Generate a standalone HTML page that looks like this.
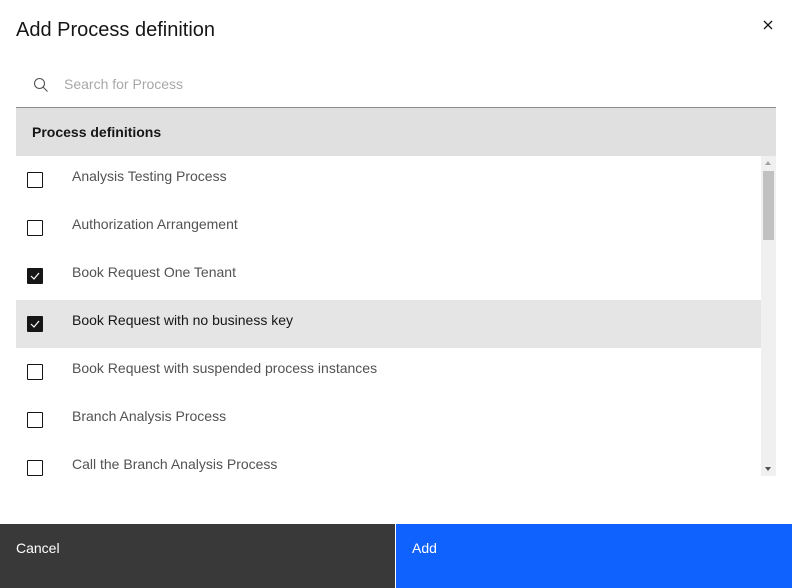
<!DOCTYPE html>
<html><head><style>
*{margin:0;padding:0;box-sizing:border-box}
body{width:792px;height:588px;background:#fff;font-family:"Liberation Sans",sans-serif;position:relative;overflow:hidden;color:#161616}
.t{position:absolute;left:16px;top:19px;font-size:20px;color:#161616}
.s{position:absolute;left:16px;top:60px;width:760px;height:48px;border-bottom:1px solid #8d8d8d}
.s span{position:absolute;left:48px;top:16px;font-size:14px;color:#a8a8a8}
.h{position:absolute;left:16px;top:108px;width:760px;height:48px;background:#e0e0e0;font-weight:bold;font-size:14px;padding:16px 0 0 16px}
.row{position:absolute;left:16px;width:745px;height:48px;font-size:14px;color:#525252}
.row span{position:absolute;left:56px;top:12px}
.cb{position:absolute;left:11px;top:16px;width:16px;height:16px;border:1px solid #161616;border-radius:1px}
.cb.c{background:#161616}
.hl{background:#e5e5e5;color:#161616}
.sb{position:absolute;left:761px;top:156px;width:15px;height:320px;background:#f0f0f0}
.th{position:absolute;left:2px;top:15px;width:11px;height:69px;background:#c1c1c1}
.f{position:absolute;top:524px;height:64px;font-size:14px;color:#fff;padding:16px}
</style></head><body>
<div class="t">Add Process definition</div>
<svg style="position:absolute;left:763px;top:20px" width="10" height="10" viewBox="0 0 10 10"><path d="M1 1l8 8M9 1l-8 8" stroke="#161616" stroke-width="1.3"/></svg>
<div class="s"><svg style="position:absolute;left:17px;top:17px" width="16" height="16" viewBox="0 0 16 16"><circle cx="6.5" cy="6.5" r="5" fill="none" stroke="#525252" stroke-width="1.1"/><path d="M10 10l4.5 4.5" stroke="#525252" stroke-width="1.1"/></svg><span>Search for Process</span></div>
<div class="h">Process definitions</div>
<div class="row" style="top:156px"><div class="cb"></div><span>Analysis Testing Process</span></div>
<div class="row" style="top:204px"><div class="cb"></div><span>Authorization Arrangement</span></div>
<div class="row" style="top:252px"><div class="cb c"><svg width="14" height="14" viewBox="0 0 14 14"><path d="M3 7l3 3 5-6" fill="none" stroke="#fff" stroke-width="1.2"/></svg></div><span>Book Request One Tenant</span></div>
<div class="row hl" style="top:300px"><div class="cb c"><svg width="14" height="14" viewBox="0 0 14 14"><path d="M3 7l3 3 5-6" fill="none" stroke="#fff" stroke-width="1.2"/></svg></div><span>Book Request with no business key</span></div>
<div class="row" style="top:348px"><div class="cb"></div><span>Book Request with suspended process instances</span></div>
<div class="row" style="top:396px"><div class="cb"></div><span>Branch Analysis Process</span></div>
<div class="row" style="top:444px;height:32px;overflow:hidden"><div class="cb"></div><span>Call the Branch Analysis Process</span></div>
<div class="sb"><div style="position:absolute;left:4px;top:5px;border:3.5px solid transparent;border-bottom:4px solid #a3a3a3;border-top:0"></div><div class="th"></div><div style="position:absolute;left:4px;bottom:5px;border:3.5px solid transparent;border-top:4px solid #505050;border-bottom:0"></div></div>
<div class="f" style="left:0;width:395px;background:#393939">Cancel</div>
<div class="f" style="left:396px;width:396px;background:#0f62fe">Add</div>
</body></html>
